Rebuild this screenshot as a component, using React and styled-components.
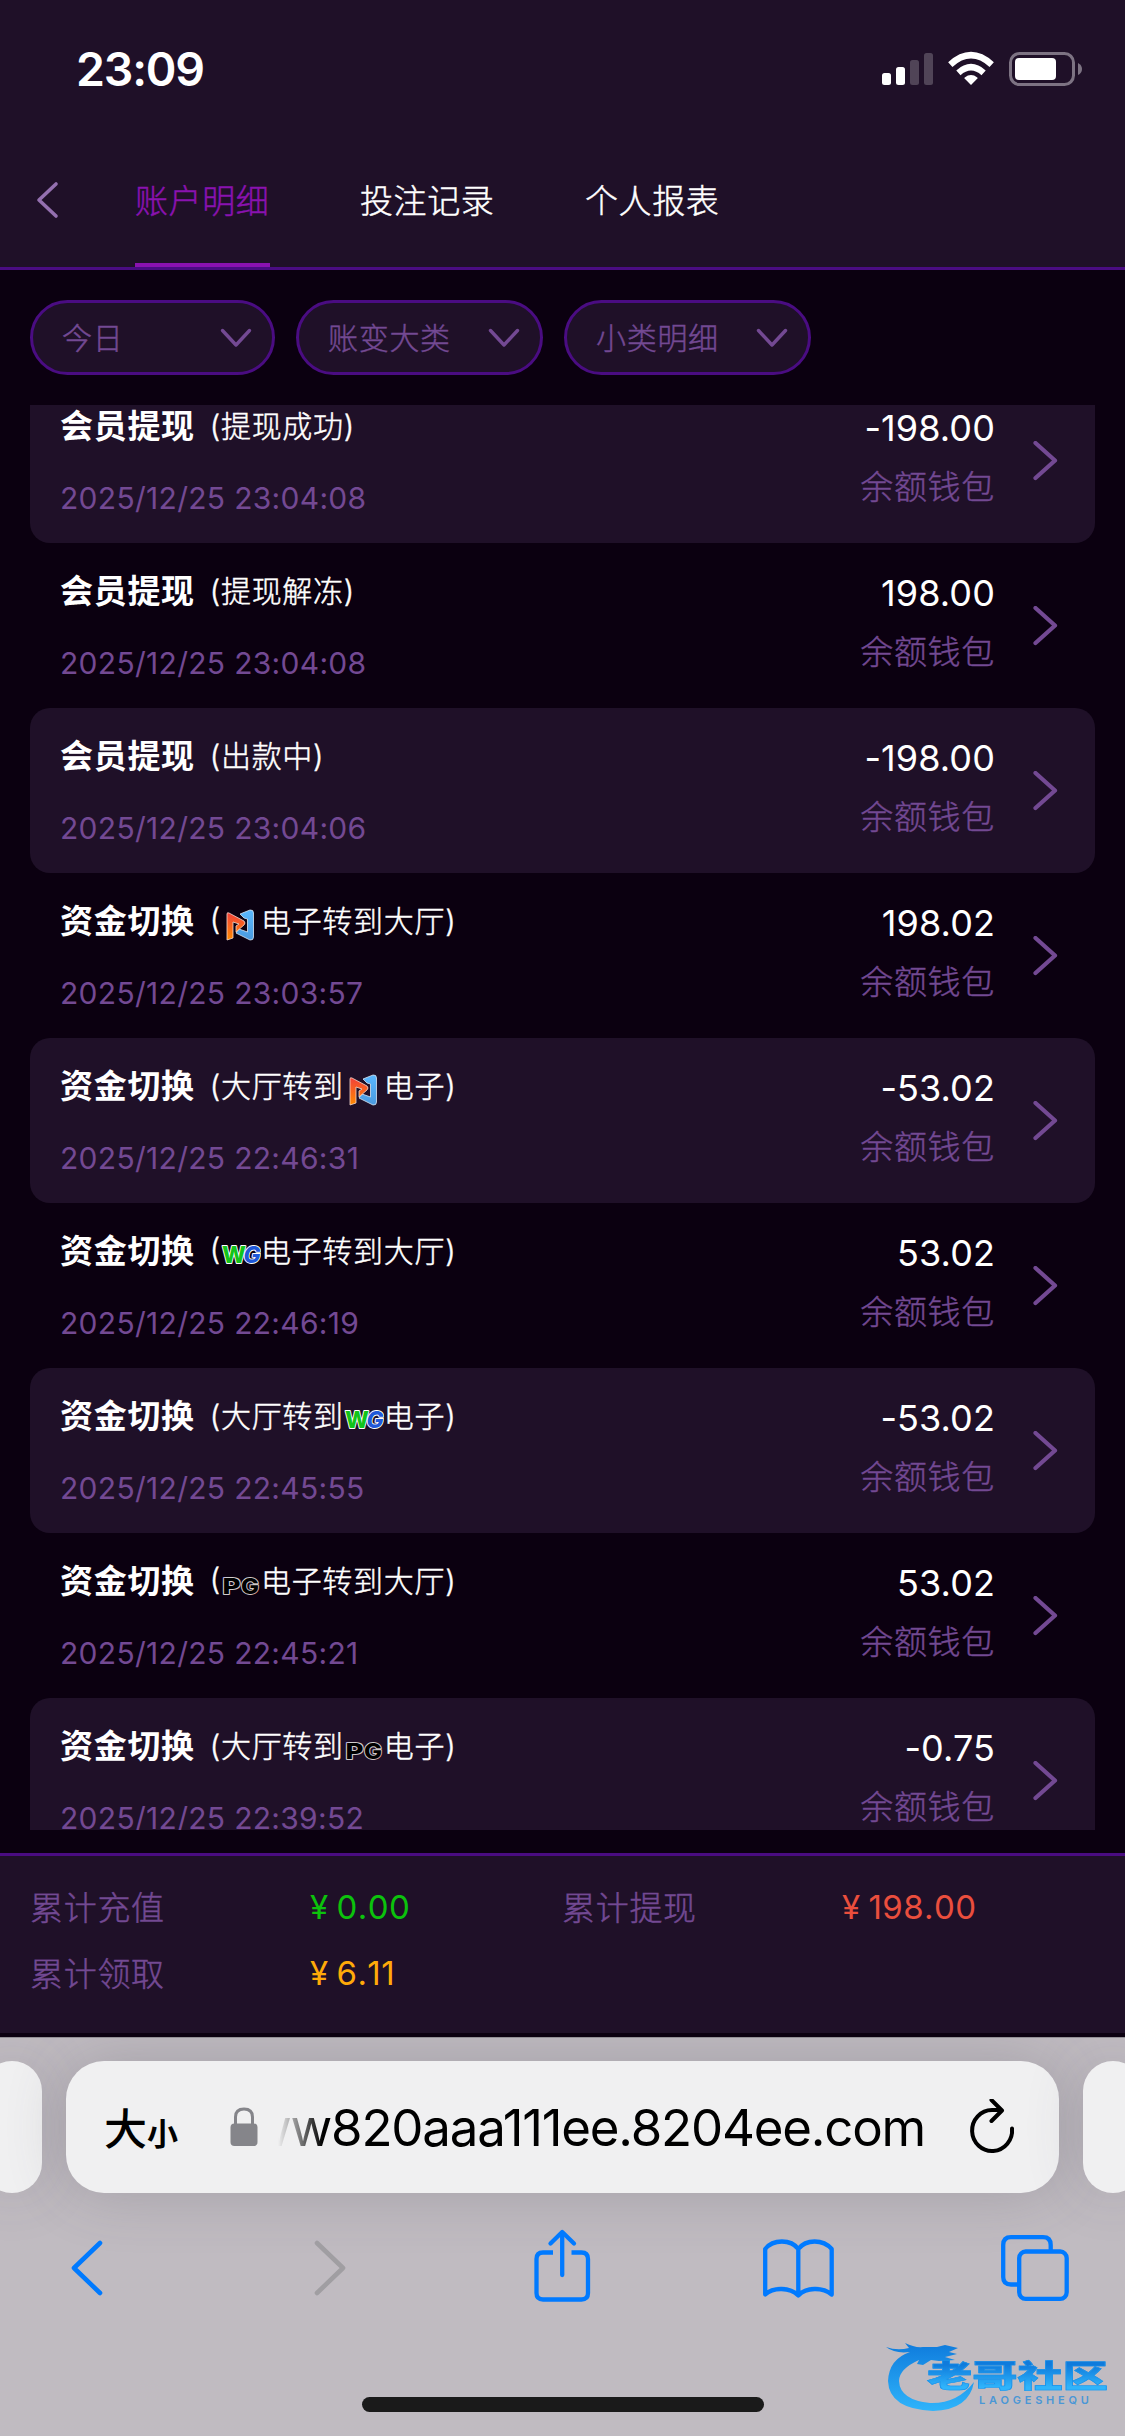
import React, { useState } from 'react';
import styled, { createGlobalStyle, css } from 'styled-components';

const GlobalStyle = createGlobalStyle`
  * {
    box-sizing: border-box;
  }
  body {
    margin: 0;
    background: #0b0010;
    font-family: Inter, 'Noto Sans CJK SC', sans-serif;
  }
  svg {
    display: block;
    flex: none;
  }
`

// light face with a hairline stroke, sits between Light and Regular
const lightText = css`
  font-weight: 300;
  -webkit-text-stroke: 0.45px currentColor;
`

const Screen = styled.div`
  display: flex;
  flex-direction: column;
  width: 1125px;
  height: 2436px;
  overflow: hidden;
  background: #0b0010;
`

const Header = styled.div`
  height: 270px;
  background: #1f1028;
  border-bottom: 3px solid #4a0c82;
`

const StatusBar = styled.div`
  display: flex;
  align-items: center;
  height: 132px;
  padding: 6px 42px 0 76px;
`

const Clock = styled.div`
  flex: 1;
  color: #fff;
  font-size: 46.5px;
  font-weight: 600;
  letter-spacing: -1.2px;
`

const Nav = styled.div`
  display: flex;
  align-items: center;
  height: 135px;
  padding-left: 34px;
`

const TabList = styled.div`
  display: flex;
  gap: 90px;
  margin-left: 75px;
`

const Tab = styled.div`
  width: 135px;
  height: 135px;
  line-height: 138px;
  font-size: 33px;
  letter-spacing: 0.6px;
  white-space: nowrap;
  ${lightText}
  color: ${props => props.$active ? '#8a12b0' : '#fff'};
  background: ${props => props.$active ? 'linear-gradient(#8a12b0, #8a12b0) bottom / 100% 4px no-repeat' : 'none'};
`

const Filters = styled.div`
  display: flex;
  gap: 21px;
  height: 135px;
  padding: 30px;
`

const Filter = styled.div`
  display: flex;
  align-items: center;
  justify-content: space-between;
  width: ${props => props.$width}px;
  height: 75px;
  padding: 0 20px 0 29px;
  border: 3px solid #4a0c82;
  border-radius: 38px;
  background: #1f1028;
  color: #734993;
  font-size: 30px;
  letter-spacing: 0.7px;
  ${lightText}
`

const FilterLabel = styled.span`
  padding-bottom: 3px;
`

const List = styled.div`
  height: 1425px;
  margin: 0 30px 23px;
  overflow: hidden;
`

const Rows = styled.div`
  margin-top: -27px;
`

const Row = styled.div`
  display: flex;
  height: 165px;
  padding: 0 37px 0 30px;
  border-radius: 20px;
  background: ${props => props.$striped ? '#1f1028' : 'transparent'};
`

const RowLeft = styled.div`
  flex: 1;
  padding-top: 23px;
`

const RowTitle = styled.div`
  display: flex;
  align-items: center;
  height: 45px;
  color: #fff;
`

const Kind = styled.span`
  font-size: 33px;
  font-weight: 600;
  letter-spacing: 0.7px;
`

const Detail = styled.span`
  display: flex;
  align-items: center;
  margin-left: 15px;
  font-size: 30px;
  letter-spacing: 0.7px;
  ${lightText}
`

const Time = styled.div`
  margin-top: 30px;
  line-height: 45px;
  color: #734993;
  font-size: 30px;
  letter-spacing: 0.3px;
`

const RowRight = styled.div`
  padding-top: 28px;
  text-align: right;
`

const Amount = styled.div`
  line-height: 45px;
  color: #fff;
  font-size: 36px;
  letter-spacing: 0.1px;
`

const Wallet = styled.div`
  margin-top: 14px;
  line-height: 45px;
  color: #734993;
  font-size: 33px;
  letter-spacing: 0.7px;
  ${lightText}
`

const RowArrow = styled.div`
  display: flex;
  align-items: center;
  margin-left: 38px;
`

const Totals = styled.div`
  display: grid;
  grid-template-columns: 280px 252px 280px 1fr;
  grid-auto-rows: 66px;
  height: 180px;
  padding: 18px 30px 0;
  border-top: 3px solid #4a0c82;
  background: #1f1028;
`

const TotalLabel = styled.div`
  line-height: 68px;
  color: #734993;
  font-size: 33px;
  letter-spacing: 0.7px;
  ${lightText}
`

const TotalValue = styled.div`
  line-height: 66px;
  color: ${props => props.$color};
  font-size: 33px;
  font-kerning: none;
  letter-spacing: 0.4px;
`

const Yen = styled.span`
  margin-right: 8px;
`

const Browser = styled.div`
  position: relative;
  flex: 1;
  margin-top: 4px;
  overflow: hidden;
  border-top: 1px solid #928f95;
  background: #c0bbc1;
`

const AddressRow = styled.div`
  display: flex;
  gap: 24px;
  width: 1161px;
  margin: 23px 0 0 -18px;
`

const NeighbourTab = styled.div`
  width: 60px;
  height: 132px;
  border-radius: 38px;
  background: #f0f0f1;
  box-shadow: 0 0 60px rgba(70, 70, 85, 0.16);
`

const AddressBar = styled.div`
  display: flex;
  align-items: center;
  width: 993px;
  height: 132px;
  padding: 0 43px 0 38px;
  border-radius: 38px;
  background: #f0f0f1;
  box-shadow: 0 0 60px rgba(70, 70, 85, 0.24);
`

const TextSize = styled.div`
  display: flex;
  align-items: baseline;
  padding-bottom: 2px;
  color: #000;
  font-size: 43px;
  font-weight: 500;
`

const SmallGlyph = styled.span`
  font-size: 31px;
  font-weight: 600;
`

const Lock = styled.div`
  margin-left: 52px;
`

const Url = styled.div`
  display: flex;
  justify-content: flex-end;
  width: 648px;
  margin-left: 20px;
  padding-right: 1px;
  overflow: hidden;
  white-space: nowrap;
  color: #000;
  font-size: 51px;
  letter-spacing: -1.2px;
  mask-image: linear-gradient(90deg, transparent, #000 45px);
`

const Reload = styled.div`
  margin-left: auto;
`

const Toolbar = styled.div`
  display: grid;
  grid-template-columns: 244px 219px 229px 239px 70px;
  align-items: center;
  height: 90px;
  margin-top: 30px;
  padding-left: 69px;
`

const HomeIndicator = styled.div`
  width: 402px;
  height: 15px;
  margin: 84px auto 0;
  border-radius: 8px;
  background: #1a1a1a;
`

const Watermark = styled.div`
  position: absolute;
  right: 14px;
  bottom: 22px;
  width: 226px;
  height: 76px;
`

const WatermarkDragon = styled.svg`
  position: absolute;
  left: 0;
  top: 0;
`

const WatermarkName = styled.div`
  position: absolute;
  left: 42px;
  top: 22px;
  line-height: 32px;
  font-size: 31px;
  font-weight: 900;
  white-space: nowrap;
  transform: scaleX(1.46);
  transform-origin: left;
  color: transparent;
  background: linear-gradient(#0f7bdc 15%, #2fb4fb 85%);
  background-clip: text;
  -webkit-text-stroke: 0.6px #1c93ea;
`

const WatermarkLatin = styled.div`
  position: absolute;
  left: 94px;
  top: 57px;
  line-height: 10px;
  color: #4a97d6;
  font-size: 11px;
  font-weight: 600;
  letter-spacing: 3.8px;
`

const StatusIcons = () => (
  <svg width="202" height="36" viewBox="881 51 202 36">
    <g fill="#fff">
      <rect x="882" y="73" width="9" height="12" rx="2.5" />
      <rect x="896" y="67" width="9" height="18" rx="2.5" />
      <rect x="910" y="60" width="9" height="25" rx="2.5" opacity=".22" />
      <rect x="924" y="53" width="9" height="32" rx="2.5" opacity=".22" />
      <path d="M971 85 L964.6 78.4 Q964.2 77.9 964.7 77.4 Q971 72.6 977.3 77.4 Q977.8 77.9 977.4 78.4 Z" />
      <rect x="1015" y="58" width="41" height="22" rx="4" />
    </g>
    <g fill="none" stroke="#fff" strokeWidth="6.4">
      <path d="M950.3 64.6 Q971 45.8 991.7 64.6" />
      <path d="M958.4 72.8 Q971 61.6 983.6 72.8" />
    </g>
    <rect x="1010.5" y="53.5" width="63" height="31" rx="9" fill="none" stroke="#7d7383" strokeWidth="3" />
    <path d="M1078 63 Q1082 65 1082 69 Q1082 73 1078 75 Z" fill="#7d7383" />
  </svg>
)

const BackIcon = () => (
  <svg width="26" height="40" viewBox="35 180 26 40">
    <path d="M57 184 L40 200 L57 216" fill="none" stroke="#9470b0" strokeWidth="3.6" strokeLinecap="round" strokeLinejoin="round" />
  </svg>
)

const DownIcon = () => (
  <svg width="32" height="20" viewBox="0 0 32 20">
    <path d="M2.5 2.5 L16 17 L29.5 2.5" fill="none" stroke="#734993" strokeWidth="3.4" strokeLinecap="round" strokeLinejoin="round" />
  </svg>
)

const RightIcon = () => (
  <svg width="25" height="40" viewBox="0 0.5 25 40">
    <path d="M2.5 2.5 L22 20 L2.5 37.5" fill="none" stroke="#734993" strokeWidth="4.2" strokeLinecap="round" strokeLinejoin="round" />
  </svg>
)

const Logo = styled.svg`
  margin-top: 4px;
  -webkit-text-stroke: 0;
`

const LogoText = styled.text`
  font-family: Inter, sans-serif;
  font-weight: 800;
  letter-spacing: 0;
  paint-order: stroke;
`

const NLogo = () => (
  <Logo width="40" height="40" viewBox="0 0 40 40">
    <defs>
      <linearGradient id="nOrange" x1="0" y1="0" x2="0" y2="1">
        <stop offset="0" stopColor="#f2403a" />
        <stop offset="1" stopColor="#ff8a00" />
      </linearGradient>
      <linearGradient id="nBlue" x1="0" y1="0" x2="0" y2="1">
        <stop offset="0" stopColor="#5ab8ff" />
        <stop offset="1" stopColor="#4a9ade" />
      </linearGradient>
    </defs>
    <path d="M19 13 L29 9 Q32.5 8.5 32.5 12 V36 Q32.5 39.5 29 39 L15 32 L18 28 L26.5 31 V18 L23 17 Z" fill="url(#nBlue)" stroke="#d8e6f4" strokeWidth="0.8" />
    <path d="M6 13 Q6 11 8 12 L23 20 Q25 22 23 24 L15 31 V25 L18 23 L12 21 V37 L6 39 Z" fill="url(#nOrange)" stroke="#f6d8cc" strokeWidth="0.8" />
  </Logo>
)

const WgLogo = () => (
  <Logo width="40" height="40" viewBox="0 0 40 40">
    <g stroke="#fff" strokeWidth="1.8" strokeLinejoin="round">
      <LogoText x="1" y="32" fontSize="23" textLength="24" lengthAdjust="spacingAndGlyphs" fill="#12c41a">W</LogoText>
      <LogoText x="22.5" y="32" fontSize="23" textLength="17" lengthAdjust="spacingAndGlyphs" fill="#2058d8" fontStyle="italic">G</LogoText>
    </g>
  </Logo>
)

const PgLogo = () => (
  <Logo width="40" height="40" viewBox="0 0 40 40">
    <defs>
      <linearGradient id="pgEdge" x1="0" y1="0" x2="1" y2="1">
        <stop offset="0" stopColor="#8a6cf0" />
        <stop offset=".2" stopColor="#d0d0d0" />
        <stop offset=".7" stopColor="#d0c8c8" />
        <stop offset="1" stopColor="#ff6a3a" />
      </linearGradient>
    </defs>
    <g fill="#000" stroke="url(#pgEdge)" strokeWidth="1.8" strokeLinejoin="round">
      <LogoText x="1.5" y="32.5" fontSize="22" textLength="18" lengthAdjust="spacingAndGlyphs">P</LogoText>
      <LogoText x="20" y="32.5" fontSize="22" textLength="18" lengthAdjust="spacingAndGlyphs">G</LogoText>
    </g>
  </Logo>
)

const LockIcon = () => (
  <svg width="28" height="40" viewBox="0 0 28 40">
    <rect x="0.5" y="16.5" width="27" height="22.5" rx="4" fill="#85858a" />
    <path d="M5.5 18 V10 Q5.5 2 14 2 Q22.5 2 22.5 10 V18" fill="none" stroke="#85858a" strokeWidth="3" />
  </svg>
)

const ReloadIcon = () => (
  <svg width="48" height="56" viewBox="969 2099.5 48 56">
    <g fill="none" stroke="#000" strokeWidth="4" strokeLinecap="round" strokeLinejoin="round">
      <path d="M1013 2129 A20 20.5 0 1 1 993 2110.5 H1001" />
      <path d="M992.5 2100.5 L1003 2111 L992.5 2121.5" />
    </g>
  </svg>
)

const ChevronIcon = ({ flipped }) => (
  <svg width="35" height="58" viewBox="0 0 35 58">
    <path
      d={flipped ? 'M4 4 L30 29 L4 54' : 'M31 4 L5 29 L31 54'}
      fill="none"
      stroke={flipped ? '#a09ea2' : '#007aff'}
      strokeWidth="4.6"
      strokeLinecap="round"
      strokeLinejoin="round"
    />
  </svg>
)

const ShareIcon = () => (
  <svg width="60" height="80" viewBox="532 2228 60 80">
    <g fill="none" stroke="#007aff" strokeWidth="4.3" strokeLinecap="round" strokeLinejoin="round">
      <path d="M553 2252.5 H543 Q536.5 2252.5 536.5 2259 V2293 Q536.5 2299.500 543 2299.500 H581.5 Q588 2299.5 588 2293 V2259 Q588 2252.5 581.5 2252.5 H571.5" strokeLinecap="butt" />
      <path d="M562.2 2233 V2275" />
      <path d="M550.5 2243.5 L562.2 2232 L574 2243.5" />
    </g>
  </svg>
)

const BookIcon = () => (
  <svg width="74" height="62" viewBox="761 2237 74 62">
    <path
      d="M798.3 2249 V2294.5 M798.3 2249 C791 2239 773 2239 765.2 2249 V2294.5 C773 2287 790 2287 798.3 2295.5 C806 2287 823 2287 831.7 2294.5 V2249 C823 2239 806 2239 798.3 2249"
      fill="none"
      stroke="#007aff"
      strokeWidth="4.3"
      strokeLinecap="round"
      strokeLinejoin="round"
    />
  </svg>
)

const TabsIcon = () => (
  <svg width="70" height="68" viewBox="1000 2234 70 68">
    <g fill="none" stroke="#007aff" strokeWidth="4.3">
      <path d="M1018 2284.5 H1011 Q1003.2 2284.5 1003.2 2277 V2245 Q1003.2 2237.2 1011 2237.2 H1043 Q1050.7 2237.2 1050.7 2245 V2251" />
      <rect x="1019.2" y="2251.5" width="47.5" height="47.3" rx="6.5" />
    </g>
  </svg>
)

const logos = { n: NLogo, wg: WgLogo, pg: PgLogo };

const records = [
  { kind: '会员提现', before: '(提现成功)', time: '2025/12/25 23:04:08', amount: '-198.00' },
  { kind: '会员提现', before: '(提现解冻)', time: '2025/12/25 23:04:08', amount: '198.00' },
  { kind: '会员提现', before: '(出款中)', time: '2025/12/25 23:04:06', amount: '-198.00' },
  { kind: '资金切换', before: '(', logo: 'n', after: '电子转到大厅)', time: '2025/12/25 23:03:57', amount: '198.02' },
  { kind: '资金切换', before: '(大厅转到', logo: 'n', after: '电子)', time: '2025/12/25 22:46:31', amount: '-53.02' },
  { kind: '资金切换', before: '(', logo: 'wg', after: '电子转到大厅)', time: '2025/12/25 22:46:19', amount: '53.02' },
  { kind: '资金切换', before: '(大厅转到', logo: 'wg', after: '电子)', time: '2025/12/25 22:45:55', amount: '-53.02' },
  { kind: '资金切换', before: '(', logo: 'pg', after: '电子转到大厅)', time: '2025/12/25 22:45:21', amount: '53.02' },
  { kind: '资金切换', before: '(大厅转到', logo: 'pg', after: '电子)', time: '2025/12/25 22:39:52', amount: '-0.75' },
];

const totals = [
  { label: '累计充值', value: '0.00', color: '#0cc20c' },
  { label: '累计提现', value: '198.00', color: '#ea4e3d' },
  { label: '累计领取', value: '6.11', color: '#ffaa09' },
];

const filters = [
  { label: '今日', width: 245 },
  { label: '账变大类', width: 247 },
  { label: '小类明细', width: 247 },
];

const tabs = ['账户明细', '投注记录', '个人报表'];

function RecordRow({ record, striped }) {
  const GameLogo = logos[record.logo];

  return (
    <Row $striped={striped}>
      <RowLeft>
        <RowTitle>
          <Kind>{record.kind}</Kind>
          <Detail>
            {record.before}
            {GameLogo && <GameLogo />}
            {record.after}
          </Detail>
        </RowTitle>
        <Time>{record.time}</Time>
      </RowLeft>
      <RowRight>
        <Amount>{record.amount}</Amount>
        <Wallet>余额钱包</Wallet>
      </RowRight>
      <RowArrow>
        <RightIcon />
      </RowArrow>
    </Row>
  )
}

function App() {
  const [activeTab, setActiveTab] = useState(0);

  return (
    <Screen>
      <GlobalStyle />
      <Header>
        <StatusBar>
          <Clock>23:09</Clock>
          <StatusIcons />
        </StatusBar>
        <Nav>
          <BackIcon />
          <TabList>
            {tabs.map((tab, index) => (
              <Tab key={tab} $active={index === activeTab} onClick={() => setActiveTab(index)}>{tab}</Tab>
            ))}
          </TabList>
        </Nav>
      </Header>

      <Filters>
        {filters.map(filter => (
          <Filter key={filter.label} $width={filter.width}>
            <FilterLabel>{filter.label}</FilterLabel>
            <DownIcon />
          </Filter>
        ))}
      </Filters>

      <List>
        <Rows>
          {records.map((record, index) => (
            <RecordRow key={index} record={record} striped={index % 2 === 0} />
          ))}
        </Rows>
      </List>

      <Totals>
        {totals.map(total => (
          <React.Fragment key={total.label}>
            <TotalLabel>{total.label}</TotalLabel>
            <TotalValue $color={total.color}><Yen>¥</Yen>{total.value}</TotalValue>
          </React.Fragment>
        ))}
      </Totals>

      <Browser>
        <AddressRow>
          <NeighbourTab />
          <AddressBar>
            <TextSize>大<SmallGlyph>小</SmallGlyph></TextSize>
            <Lock><LockIcon /></Lock>
            <Url>ww820aaa111ee.8204ee.com</Url>
            <Reload><ReloadIcon /></Reload>
          </AddressBar>
          <NeighbourTab />
        </AddressRow>
        <Toolbar>
          <ChevronIcon />
          <ChevronIcon flipped />
          <ShareIcon />
          <BookIcon />
          <TabsIcon />
        </Toolbar>
        <HomeIndicator />
        <Watermark>
          <WatermarkDragon width="90" height="76" viewBox="0 0 90 76">
            <defs>
              <linearGradient id="dragon" x1="0" y1="0" x2="0" y2="1">
                <stop offset="0" stopColor="#0f7bdc" />
                <stop offset="1" stopColor="#2fb4fb" />
              </linearGradient>
            </defs>
            <path
              d="M1 9 Q12 13 24 10 L20 5 Q30 10 38 9 L52 9 L60 7 L73 10 L64 14 L72 16 L60 19 L70 22 L54 23 L46 22 L38 27 L32 26 L34 22 Q14 31 14 43 Q15 62 45 65 Q72 66 89 44 Q84 72 48 73 Q4 71 3 43 Q4 21 25 14 Q10 16 1 9 Z"
              fill="url(#dragon)"
            />
          </WatermarkDragon>
          <WatermarkName>老哥社区</WatermarkName>
          <WatermarkLatin>LAOGESHEQU</WatermarkLatin>
        </Watermark>
      </Browser>
    </Screen>
  )
}

export default App;
